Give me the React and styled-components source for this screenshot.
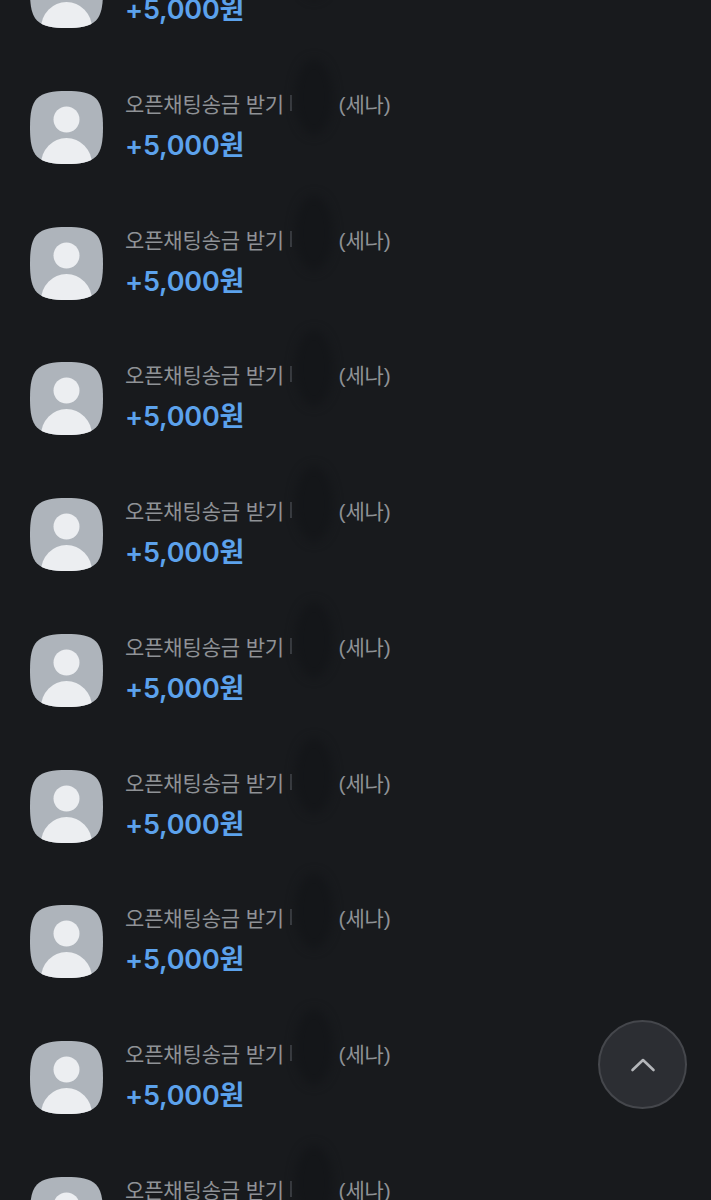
import React from 'react';
import styled, { createGlobalStyle } from 'styled-components';

const Global = createGlobalStyle`
  html, body { margin: 0; padding: 0; background: #181a1d; height: 100%; overflow: hidden; }
  * { box-sizing: border-box; }
`;
const Page = styled.div`
  width: 711px; height: 1200px; overflow: hidden; position: relative; background: #181a1d;
  font-family: "Liberation Sans", "Noto Sans CJK KR", sans-serif;
`;
const List = styled.ul`
  list-style: none; margin: -45px 0 0; padding: 0; display: flex; flex-direction: column;
`;
const Row = styled.li`
  position: relative; height: 135.75px; padding-left: 29.5px; display: flex; align-items: flex-start; gap: 22.5px; flex-shrink: 0;
`;
const Avatar = styled.svg`
  width: 73px; height: 73px; flex-shrink: 0; display: block;
`;
const Info = styled.div`
  display: flex; flex-direction: column;
`;
const Title = styled.div`
  display: flex; align-items: center; height: 24px; font-size: 21px; letter-spacing: -0.15px; color: #8f9296;
  white-space: nowrap;
`;
const Divider = styled.span`
  width: 2px; height: 16px; background: #3f4247; margin-left: 6px; margin-right: 46.5px;
`;
const Amount = styled.div`
  margin-top: 14px; font-family: Inter, "Noto Sans CJK KR", sans-serif; font-size: 27px; line-height: 34px; font-weight: 600;
  letter-spacing: -0.2px; color: #5ca2ec; white-space: nowrap;
`;
const Smudge = styled.span`
  position: absolute; left: 295px; top: -32px; width: 38px; height: 76px; border-radius: 50%;
  background: #141619; filter: blur(5px);
`;
const TopButton = styled.button`
  position: absolute; left: 598px; top: 1020px; width: 89px; height: 89px; border-radius: 50%;
  background: #2c2e33; border: 2px solid #45474c; padding: 0; display: flex; align-items: center; justify-content: center;
`;

const Person = () => (
  <Avatar viewBox="0 0 73 73">
    <defs>
      <clipPath id="sq"><path d="M36.5 0C50 0 60 1.5 66 7.5C71.5 13 73 23 73 36.5C73 50 71.5 60 66 65.5C60 71.5 50 73 36.5 73C23 73 13 71.5 7 65.5C1.5 60 0 50 0 36.5C0 23 1.5 13 7 7.5C13 1.5 23 0 36.5 0Z" /></clipPath>
    </defs>
    <g clipPath="url(#sq)">
      <rect width="73" height="73" fill="#aeb4bb" />
      <circle cx="36.5" cy="28.5" r="13" fill="#eceef1" />
      <ellipse cx="36.5" cy="73.5" rx="25.5" ry="26.5" fill="#eceef1" />
    </g>
  </Avatar>
);

export default function App() {
  return (
    <Page>
      <Global />
      <List>
        {Array.from({ length: 10 }, (_, i) => (
          <Row key={i}>
            <Smudge />
            <Person />
            <Info>
              <Title>오픈채팅송금 받기<Divider />(세나)</Title>
              <Amount>+5,000원</Amount>
            </Info>
          </Row>
        ))}
      </List>
      <TopButton aria-label="맨 위로">
        <svg width="26" height="16" viewBox="0 0 26 16" fill="none">
          <path d="M2.5 13L13 3L23.5 13" stroke="#b4b6ba" strokeWidth="2.6" strokeLinecap="round" strokeLinejoin="round" />
        </svg>
      </TopButton>
    </Page>
  );
}
